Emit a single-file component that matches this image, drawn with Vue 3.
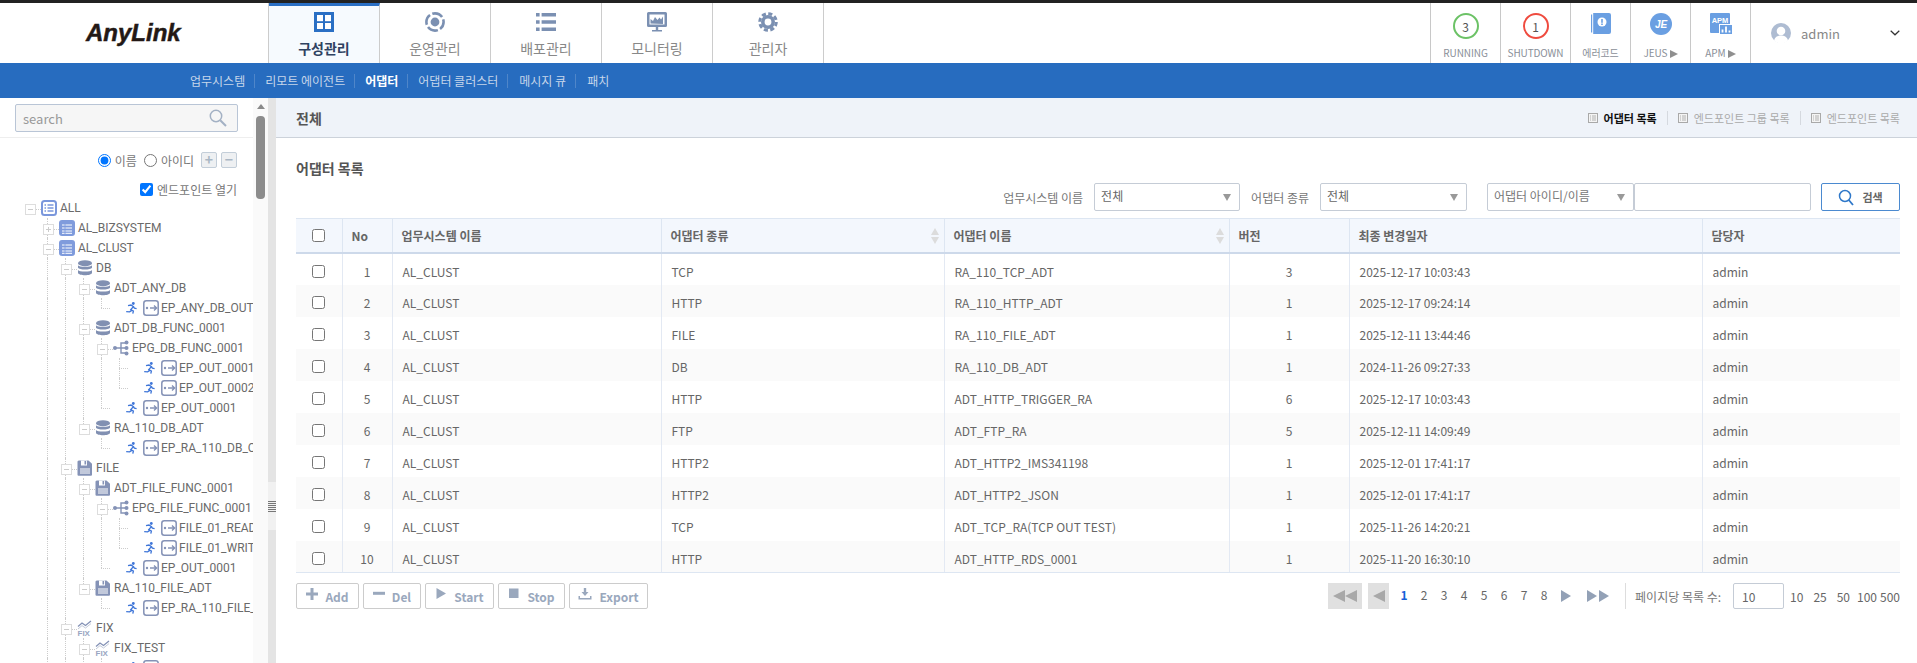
<template>
  <div class="app">
    <svg class="sprite" width="0" height="0">
      <defs>
        <symbol id="i-all" viewBox="0 0 16 16">
          <rect x="1" y="1" width="14" height="14" rx="2.5" fill="#fff" stroke="#7a97dc" stroke-width="2" />
          <path d="M3.5 5h1.5M6.5 5h6M3.500 8h1.500M6.500 8h6M3.500 11h1.500M6.500 11h6" stroke="#7a97dc" stroke-width="1.500" />
        </symbol>
        <symbol id="i-sys" viewBox="0 0 16 16">
          <rect width="16" height="16" rx="3" fill="#7f9bdc" />
          <path d="M3 5h10M3 8h10M3 11h10M3 13.300h10" stroke="#fff" stroke-width="1" />
          <path d="M6 4v10" stroke="#7f9bdc" stroke-width="0.8" />
        </symbol>
        <symbol id="i-db" viewBox="0 0 16 16">
          <ellipse cx="8" cy="3.2" rx="7" ry="3" fill="#8190b2" />
          <path d="M1 5.200c1 2 13 2 14 0v2.600c-1 2.400-13 2.400-14 0zM1 10c1 2 13 2 14 0v3c-1 3-13 3-14 0z" fill="#8190b2" />
        </symbol>
        <symbol id="i-file" viewBox="0 0 16 16">
          <path d="M1.500 0.500h10l3.500 3.200v11a1 1 0 0 1-1 1H1.500a1 1 0 0 1-1-1v-13a1 1 0 0 1 1-1z" fill="#8492b6" />
          <rect x="4" y="0.5" width="6" height="5" fill="#fff" />
          <rect x="7.5" y="1" width="1.6" height="3.5" fill="#8492b6" />
          <path d="M3 9h10M3 11h10M3 13h10" stroke="#fff" stroke-width="1" />
        </symbol>
        <symbol id="i-group" viewBox="0 0 16 16">
          <circle cx="2" cy="8" r="2" fill="#8492b6" />
          <path d="M3 8h5M8 8V3h4M8 8v5h4M8 8h4" stroke="#8492b6" stroke-width="1.4" fill="none" />
          <circle cx="13.5" cy="2.5" r="2" fill="#8492b6" />
          <circle cx="13.5" cy="8" r="2" fill="#8492b6" />
          <circle cx="13.5" cy="13.5" r="2" fill="#8492b6" />
        </symbol>
        <symbol id="i-ep" viewBox="0 0 16 16">
          <rect x="0.8" y="0.8" width="14.4" height="14.4" rx="2.5" fill="#fff" stroke="#8492b6" stroke-width="1.5" />
          <circle cx="4" cy="8" r="1.2" fill="#8492b6" />
          <path d="M7 8h6.500M11 5.600 13.600 8 11 10.400" stroke="#8492b6" stroke-width="1.4" fill="none" />
        </symbol>
        <symbol id="i-run" viewBox="0 0 12 12">
          <circle cx="8.3" cy="1.5" r="1.4" fill="#3f76d8" />
          <path d="M3 3.700 6 3l2.400 1.600-2.600 3 2.600 1.400-.6 2.600M6.800 8.400 4.600 9.800 1.200 9.600M8.400 4.600l1 1.600 2.200.4" stroke="#3f76d8" stroke-width="1.3" fill="none" />
        </symbol>
        <symbol id="i-fix" viewBox="0 0 16 16">
          <path d="M1 6.500 5 3l3.500 2.500L14 1" stroke="#8492b6" stroke-width="1.3" fill="none" />
          <path d="M1 9 5 5.600l3.500 2.400L14 3.600" stroke="#c3cad9" stroke-width="1" fill="none" />
          <text x="0.5" y="15.5" font-size="8" font-weight="700" font-family="Liberation Sans, sans-serif" fill="#9aa6c2">FIX</text>
        </symbol>
        <symbol id="i-doc" viewBox="0 0 10 10">
          <rect x="0.5" y="0.5" width="9" height="9" fill="#f4f4f4" stroke="#a9a9a9" />
          <path d="M2 3h1M4 3h4M2 5h1M4 5h4M2 7h1M4 7h4" stroke="#a9a9a9" stroke-width="0.9" />
        </symbol>
      </defs>
    </svg>

    <div class="blackbar"></div>

    <header class="topbar">
      <div class="logo">AnyLink</div>
      <nav class="tabs">
        <a class="tab active">
          <svg width="20" height="20" viewBox="0 0 20 20">
            <rect width="20" height="20" fill="#2a6fc4" />
            <rect x="3" y="3" width="6" height="6.2" fill="#fff" />
            <rect x="11" y="3" width="6" height="6.2" fill="#fff" />
            <rect x="3" y="11" width="6" height="6" fill="#fff" />
            <rect x="11" y="11" width="6" height="6" fill="#fff" />
          </svg>
          <span>구성관리</span>
        </a>
        <a class="tab">
          <svg width="20" height="20" viewBox="0 0 20 20">
            <circle cx="10" cy="10" r="8.6" fill="none" stroke="#7b90b2" stroke-width="2.6" stroke-dasharray="11 2.5" stroke-dashoffset="3" />
            <circle cx="10" cy="10" r="4.4" fill="#7b90b2" />
          </svg>
          <span>운영관리</span>
        </a>
        <a class="tab">
          <svg width="20" height="20" viewBox="0 0 20 20">
            <path d="M0 1h3.600v3.400H0zM5.600 1H20v3.400H5.600zM0 8.300h3.600v3.400H0zM5.600 8.300H20v3.400H5.600zM0 15.600h3.600V19H0zM5.600 15.600H20V19H5.600z" fill="#7b90b2" />
          </svg>
          <span>배포관리</span>
        </a>
        <a class="tab">
          <svg width="20" height="20" viewBox="0 0 20 20">
            <path d="M1.500 0h17A1.500 1.500 0 0 1 20 1.500v12a1.500 1.500 0 0 1-1.500 1.500h-17A1.500 1.500 0 0 1 0 13.500v-12A1.500 1.500 0 0 1 1.500 0z" fill="#7b90b2" />
            <rect x="2.500" y="2.500" width="15" height="10" fill="#fff" />
            <path d="M3.500 11.500V7l2.500 2 2-4 2.500 3 2-2.500 1.500 2 2-3v7.500z" fill="#7b90b2" />
            <path d="M8.800 15h2.400v3H15v1.600H5V18h3.800z" fill="#7b90b2" />
          </svg>
          <span>모니터링</span>
        </a>
        <a class="tab">
          <svg width="20" height="20" viewBox="0 0 20 20">
            <circle cx="10" cy="10" r="8.300" fill="none" stroke="#7b90b2" stroke-width="3" stroke-dasharray="4.100 2.420" />
            <circle cx="10" cy="10" r="5.200" fill="none" stroke="#7b90b2" stroke-width="3.600" />
          </svg>
          <span>관리자</span>
        </a>
      </nav>

      <div class="status">
        <div class="stat">
          <span class="ring green">3</span>
          <small>RUNNING</small>
        </div>
        <div class="stat">
          <span class="ring red">1</span>
          <small>SHUTDOWN</small>
        </div>
        <div class="stat narrow">
          <svg width="20" height="21" viewBox="0 0 20 21">
            <path d="M0 1.500h1.200v18H0zM2.200 0H18a2 2 0 0 1 2 2v17a2 2 0 0 1-2 2H2.200z" fill="#6a9fe2" />
            <circle cx="11" cy="9" r="4.500" fill="#fff" />
            <rect x="10.200" y="6" width="1.600" height="3.800" fill="#6a9fe2" />
            <rect x="10.200" y="10.500" width="1.600" height="1.500" fill="#6a9fe2" />
          </svg>
          <small>에러코드</small>
        </div>
        <div class="stat narrow">
          <svg width="22" height="22" viewBox="0 0 22 22">
            <circle cx="11" cy="11" r="11" fill="#6a9fe2" />
            <text x="11" y="15" text-anchor="middle" font-size="10" font-weight="700" font-style="italic" font-family="Liberation Sans, sans-serif" fill="#fff">JE</text>
          </svg>
          <small>JEUS <i class="play"></i></small>
        </div>
        <div class="stat narrow">
          <svg width="22" height="21" viewBox="0 0 22 21">
            <rect width="20" height="20" rx="1" fill="#6a9fe2" />
            <text x="10" y="9.500" text-anchor="middle" font-size="7.500" font-weight="700" font-family="Liberation Sans, sans-serif" fill="#fff">APM</text>
            <rect x="9" y="11" width="13" height="10" fill="#fff" />
            <rect x="10" y="12" width="12" height="9" fill="#6a9fe2" />
            <path d="M12.500 19.500v-3M16 19.500v-6M19.500 19.500v-2" stroke="#fff" stroke-width="1.800" />
          </svg>
          <small>APM <i class="play"></i></small>
        </div>
      </div>

      <div class="user">
        <svg width="20" height="20" viewBox="0 0 20 20">
          <circle cx="10" cy="10" r="10" fill="#aebcd2" />
          <circle cx="10" cy="8" r="4.300" fill="#fff" />
          <path d="M3 17.500c1-3.800 4-5 7-5s6 1.200 7 5a10 10 0 0 1-14 0z" fill="#fff" />
        </svg>
        <span>admin</span>
        <svg class="chev" width="10" height="6" viewBox="0 0 10 6">
          <path d="M.7.7 5 4.800 9.300.7" stroke="#333" stroke-width="1.200" fill="none" />
        </svg>
      </div>
    </header>

    <nav class="subnav">
      <a v-for="item in subMenu" :key="item" :class="{ on: item === '어댑터' }">{{ item }}</a>
    </nav>

    <div class="body">
      <aside class="side">
        <div class="side-main">
          <div class="side-search">
            <div class="search-box">
              <span>search</span>
              <svg width="18" height="18" viewBox="0 0 18 18">
                <circle cx="7" cy="7" r="5.700" fill="none" stroke="#a3b1c4" stroke-width="1.500" />
                <path d="M11.200 11.200 17 17" stroke="#a3b1c4" stroke-width="2" />
              </svg>
            </div>
          </div>
          <div class="side-opts">
            <div class="opt-row">
              <label><input type="radio" name="tree" checked />이름</label>
              <label class="tight"><input type="radio" name="tree" />아이디</label>
              <span class="sq">+</span>
              <span class="sq">−</span>
            </div>
            <div class="opt-row second">
              <label><input type="checkbox" checked />엔드포인트 열기</label>
            </div>
          </div>
          <ul class="tree">
            <li v-for="(row, i) in treeRows" :key="i" class="node" :class="{ leaf: row.leaf }">
              <span v-for="(g, c) in row.guides" :key="c" class="cell" :class="{ line: g }"></span>
              <span v-if="row.leaf" class="cell elbow" :class="{ line: row.next, half: !row.next }"></span>
              <span v-else class="cell" :class="{ line: row.next, half: row.d > 0 && !row.next }">
                <i class="fold" :class="{ plus: row.closed }"></i>
                <i class="dash"></i>
              </span>
              <svg v-if="row.leaf" class="run" width="12" height="12"><use href="#i-run" /></svg>
              <svg class="ico" width="16" height="16"><use :href="'#i-' + row.icon" /></svg>
              <span class="label">{{ row.t }}</span>
            </li>
          </ul>
        </div>
        <div class="side-scroll">
          <i class="up"></i>
          <i class="thumb"></i>
        </div>
        <div class="splitter">
          <div class="grip"><i></i></div>
        </div>
      </aside>

      <main class="main">
        <div class="titlebar">
          <h2>전체</h2>
          <div class="views">
            <a v-for="v in views" :key="v" :class="{ on: v === '어댑터 목록' }">
              <svg width="10" height="10"><use href="#i-doc" /></svg>{{ v }}
            </a>
          </div>
        </div>

        <section class="content">
          <h3>어댑터 목록</h3>

          <div class="filters">
            <label class="f-label first">업무시스템 이름</label>
            <div class="sel short"><span>전체</span><i></i></div>
            <label class="f-label">어댑터 종류</label>
            <div class="sel"><span>전체</span><i></i></div>
            <div class="sel wide"><span>어댑터 아이디/이름</span><i></i></div>
            <div class="txt"></div>
            <button class="search-btn">
              <svg width="17" height="17" viewBox="0 0 17 17">
                <circle cx="7" cy="7" r="5.500" fill="none" stroke="#2f78c9" stroke-width="1.500" />
                <path d="M10.800 11 15 16" stroke="#2f78c9" stroke-width="1.800" />
              </svg>
              검색
            </button>
          </div>

          <table class="grid">
            <colgroup>
              <col v-for="w in colWidths" :key="w" :style="{ width: w + 'px' }" />
            </colgroup>
            <thead>
              <tr>
                <th class="c"><input type="checkbox" /></th>
                <th>No</th>
                <th>업무시스템 이름</th>
                <th class="sort">어댑터 종류</th>
                <th class="sort">어댑터 이름</th>
                <th>버전</th>
                <th>최종 변경일자</th>
                <th>담당자</th>
              </tr>
            </thead>
            <tbody>
              <tr v-for="(r, i) in adapters" :key="i">
                <td class="c"><input type="checkbox" /></td>
                <td class="c">{{ i + 1 }}</td>
                <td>AL_CLUST</td>
                <td>{{ r[0] }}</td>
                <td>{{ r[1] }}</td>
                <td class="c">{{ r[2] }}</td>
                <td>{{ r[3] }}</td>
                <td>admin</td>
              </tr>
            </tbody>
          </table>

          <div class="foot">
            <div class="actions">
              <button class="b-add">
                <svg width="12" height="12" viewBox="0 0 12 12"><path d="M4.500 0h3v4.500H12v3H7.500V12h-3V7.500H0v-3h4.500z" fill="#9aa8bd" /></svg>
                Add
              </button>
              <button class="b-del">
                <svg width="12" height="12" viewBox="0 0 12 12"><rect y="3.800" width="12" height="3" fill="#9aa8bd" /></svg>
                Del
              </button>
              <button class="b-start">
                <svg width="12" height="12" viewBox="0 0 12 12"><path d="M1.500 0 11 5.500 1.500 11z" fill="#9aa8bd" /></svg>
                Start
              </button>
              <button class="b-stop">
                <svg width="12" height="12" viewBox="0 0 12 12"><rect x="1" y="0.500" width="9.500" height="9.500" fill="#9aa8bd" /></svg>
                Stop
              </button>
              <button class="b-export">
                <svg width="14" height="12" viewBox="0 0 14 12"><path d="M5.800 0h2.400v4h2.300L7 8 3.500 4h2.300zM.5 8H2v2h10V8h1.500v3.500H.5z" fill="#9aa8bd" /></svg>
                Export
              </button>
            </div>

            <div class="pager">
              <span class="pg-box big"><i class="tl"></i><i class="tl"></i></span>
              <span class="pg-box"><i class="tl"></i></span>
              <div class="pages">
                <a v-for="p in 8" :key="p" :class="{ on: p === 1 }">{{ p }}</a>
              </div>
              <i class="tr next"></i>
              <span class="last"><i class="tr"></i><i class="tr"></i></span>
              <span class="pg-sep"></span>
              <span class="pg-label">페이지당 목록 수:</span>
              <div class="pg-input">10</div>
              <div class="pg-sizes">
                <a v-for="s in [10, 25, 50, 100, 500]" :key="s">{{ s }}</a>
              </div>
            </div>
          </div>
        </section>
      </main>
    </div>
  </div>
</template>

<script setup>
const subMenu = ['업무시스템', '리모트 에이전트', '어댑터', '어댑터 클러스터', '메시지 큐', '패치']
const views = ['어댑터 목록', '엔드포인트 그룹 목록', '엔드포인트 목록']
const colWidths = [46, 50, 269, 283, 285, 120, 353, 198]

const adapters = [
  ['TCP', 'RA_110_TCP_ADT', 3, '2025-12-17 10:03:43'],
  ['HTTP', 'RA_110_HTTP_ADT', 1, '2025-12-17 09:24:14'],
  ['FILE', 'RA_110_FILE_ADT', 1, '2025-12-11 13:44:46'],
  ['DB', 'RA_110_DB_ADT', 1, '2024-11-26 09:27:33'],
  ['HTTP', 'ADT_HTTP_TRIGGER_RA', 6, '2025-12-17 10:03:43'],
  ['FTP', 'ADT_FTP_RA', 5, '2025-12-11 14:09:49'],
  ['HTTP2', 'ADT_HTTP2_IMS341198', 1, '2025-12-01 17:41:17'],
  ['HTTP2', 'ADT_HTTP2_JSON', 1, '2025-12-01 17:41:17'],
  ['TCP', 'ADT_TCP_RA(TCP OUT TEST)', 1, '2025-11-26 14:20:21'],
  ['HTTP', 'ADT_HTTP_RDS_0001', 1, '2025-11-20 16:30:10']
]

const rawTree = [
  { d: 0, t: 'ALL', icon: 'all' },
  { d: 1, t: 'AL_BIZSYSTEM', icon: 'sys', closed: true },
  { d: 1, t: 'AL_CLUST', icon: 'sys' },
  { d: 2, t: 'DB', icon: 'db' },
  { d: 3, t: 'ADT_ANY_DB', icon: 'db' },
  { d: 4, t: 'EP_ANY_DB_OUT', icon: 'ep', leaf: true },
  { d: 3, t: 'ADT_DB_FUNC_0001', icon: 'db' },
  { d: 4, t: 'EPG_DB_FUNC_0001', icon: 'group' },
  { d: 5, t: 'EP_OUT_0001', icon: 'ep', leaf: true },
  { d: 5, t: 'EP_OUT_0002', icon: 'ep', leaf: true },
  { d: 4, t: 'EP_OUT_0001', icon: 'ep', leaf: true },
  { d: 3, t: 'RA_110_DB_ADT', icon: 'db' },
  { d: 4, t: 'EP_RA_110_DB_OUT', icon: 'ep', leaf: true },
  { d: 2, t: 'FILE', icon: 'file' },
  { d: 3, t: 'ADT_FILE_FUNC_0001', icon: 'file' },
  { d: 4, t: 'EPG_FILE_FUNC_0001', icon: 'group' },
  { d: 5, t: 'FILE_01_READ', icon: 'ep', leaf: true },
  { d: 5, t: 'FILE_01_WRITE', icon: 'ep', leaf: true },
  { d: 4, t: 'EP_OUT_0001', icon: 'ep', leaf: true },
  { d: 3, t: 'RA_110_FILE_ADT', icon: 'file' },
  { d: 4, t: 'EP_RA_110_FILE_OUT', icon: 'ep', leaf: true },
  { d: 2, t: 'FIX', icon: 'fix' },
  { d: 3, t: 'FIX_TEST', icon: 'fix' },
  { d: 4, t: 'EP_FIX', icon: 'ep', leaf: true },
  { d: 3, t: 'FIX_TEST2', icon: 'fix' },
  { d: 2, t: 'FTP', icon: 'file' },
  { d: 1, t: 'AL_TEST', icon: 'sys' }
]

function hasLater(i, col) {
  for (let j = i + 1; j < rawTree.length; j++) {
    if (rawTree[j].d < col) return false
    if (rawTree[j].d === col) return true
  }
  return false
}

const treeRows = rawTree.map((r, i) => ({
  ...r,
  next: hasLater(i, r.d),
  guides: Array.from({ length: r.d }, (_, c) => hasLater(i, c))
}))
</script>

<style>
html,
body {
  margin: 0;
  height: 100%;
  overflow: hidden;
  background: #fff;
}
</style>

<style scoped>
.app {
  height: 663px;
  display: flex;
  flex-direction: column;
  overflow: hidden;
  font-family: "Noto Sans CJK KR", "Noto Sans", sans-serif;
  font-size: 12px;
  color: #666;
}

.sprite {
  position: absolute;
}

.blackbar {
  height: 3px;
  background: #222;
  flex: none;
}

.topbar {
  height: 60px;
  flex: none;
  display: flex;
  background: #fff;
}

.logo {
  width: 268px;
  flex: none;
  box-sizing: border-box;
  padding: 15px 0 0 86px;
  font-family: "Liberation Sans", sans-serif;
  font-weight: 700;
  font-style: italic;
  font-size: 24px;
  line-height: 30px;
  color: #231815;
  -webkit-text-stroke: 0.5px #231815;
}

.tabs {
  display: flex;
  border-left: 1px solid #ccc;
}

.tab {
  width: 111px;
  border-right: 1px solid #ccc;
  display: flex;
  flex-direction: column;
  align-items: center;
  padding-top: 9px;
  box-sizing: border-box;
  font-size: 14px;
  color: #888;
}

.tab span {
  margin-top: 6px;
  line-height: 20px;
}

.tab.active {
  background: #f6fafe;
  border-top: 3px solid #2a6fc4;
  padding-top: 6px;
  color: #2f4261;
  font-weight: 700;
}

.status {
  margin-left: auto;
  display: flex;
  border-left: 1px solid #c8c8c8;
}

.stat {
  width: 70px;
  border-right: 1px solid #c8c8c8;
  display: flex;
  flex-direction: column;
  align-items: center;
  padding-top: 10px;
  box-sizing: border-box;
  height: 60px;
}

.stat.narrow {
  width: 60px;
}

.stat small {
  margin-top: auto;
  height: 20px;
  font-size: 10px;
  letter-spacing: -0.1px;
  line-height: 20px;
  color: #8a8f98;
  white-space: nowrap;
}

.ring {
  width: 26px;
  height: 26px;
  box-sizing: border-box;
  border-radius: 50%;
  border: 2px solid;
  display: flex;
  align-items: center;
  justify-content: center;
  font-size: 12px;
  color: #555;
}

.ring.green {
  border-color: #6cc266;
}

.ring.red {
  border-color: #ef4b3f;
}

.play {
  display: inline-block;
  border-left: 8px solid #8f8f8f;
  border-top: 4.5px solid transparent;
  border-bottom: 4.5px solid transparent;
  vertical-align: -1px;
}

.user {
  width: 166px;
  flex: none;
  box-sizing: border-box;
  display: flex;
  align-items: center;
  padding: 0 17px 0 20px;
  font-size: 13px;
  color: #888;
}

.user span {
  margin-left: 10px;
}

.chev {
  margin-left: auto;
}

.subnav {
  height: 35px;
  flex: none;
  background: #276cbf;
  display: flex;
  align-items: center;
  padding-left: 190px;
  color: #c6d6ea;
}

.subnav a {
  padding: 0 9px 0 10px;
  border-right: 1px solid #4f86c9;
  line-height: 14px;
}

.subnav a:first-child {
  padding-left: 0;
}

.subnav a:nth-child(5) {
  padding-left: 11px;
}

.subnav a:last-child {
  padding-left: 11px;
  border-right: 0;
}

.subnav a.on {
  color: #fff;
  font-weight: 700;
}

.body {
  flex: 1;
  display: flex;
  min-height: 0;
}

.side {
  flex: none;
  width: 276px;
  display: flex;
}

.side-main {
  width: 253px;
  overflow: hidden;
  font-family: Roboto, "Noto Sans CJK KR", sans-serif;
}

.side-search {
  height: 40px;
  box-sizing: border-box;
  padding: 6px 15px 0;
  border-bottom: 1px solid #eee;
}

.search-box {
  height: 28px;
  box-sizing: border-box;
  border: 1px solid #b9c5d6;
  border-radius: 2px;
  background: #f6f6f6;
  display: flex;
  align-items: center;
  justify-content: space-between;
  padding: 0 10px 0 7px;
  font-family: "Noto Sans CJK KR", sans-serif;
  font-size: 13px;
  color: #999;
}

.side-opts {
  padding: 13px 16px 0 0;
  color: #777;
  font-family: "Noto Sans CJK KR", sans-serif;
}

.opt-row {
  height: 18px;
  display: flex;
  align-items: center;
  justify-content: flex-end;
}

.opt-row.second {
  margin-top: 12px;
  height: 17px;
}

.opt-row label {
  display: flex;
  align-items: center;
  margin-right: 7px;
}

.opt-row label.tight {
  margin-right: 3px;
}

.opt-row.second label {
  margin-right: 0;
}

.opt-row input {
  margin: 0 4px 0 0;
  width: 13px;
  height: 13px;
}

.sq {
  width: 16px;
  height: 16px;
  box-sizing: border-box;
  border: 1px solid #c3ced9;
  border-radius: 2px;
  background: #eef0f2;
  color: #a9b6c4;
  font-size: 14px;
  font-weight: 700;
  line-height: 13px;
  text-align: center;
  margin-left: 4px;
}

.tree {
  list-style: none;
  margin: 0;
  padding: 0 0 0 25px;
  color: #6a6a6a;
}

.node {
  height: 20px;
  display: flex;
  align-items: center;
  white-space: nowrap;
}

.cell {
  flex: none;
  width: 18px;
  height: 20px;
  position: relative;
}

.cell.line::before,
.cell.half::before {
  content: "";
  position: absolute;
  left: 4px;
  top: 0;
  bottom: 0;
  border-left: 1px dotted #ccc;
}

.cell.half::before {
  bottom: 10px;
}

.fold {
  position: absolute;
  left: 0;
  top: 6px;
  width: 11px;
  height: 11px;
  box-sizing: border-box;
  border: 1px solid #ddd;
  background:
    linear-gradient(#ccc, #ccc) center / 5px 1px no-repeat,
    #fff;
}

.fold.plus {
  background:
    linear-gradient(#ccc, #ccc) center / 5px 1px no-repeat,
    linear-gradient(#ccc, #ccc) center / 1px 5px no-repeat,
    #fff;
}

.dash {
  position: absolute;
  left: 11px;
  top: 11px;
  width: 5px;
  border-top: 1px dotted #ccc;
}

.elbow::after {
  content: "";
  position: absolute;
  left: 4px;
  top: 10px;
  width: 9px;
  border-top: 1px dotted #ccc;
}

.run {
  flex: none;
  margin: 0 6px 0 10px;
}

.ico {
  flex: none;
  margin-left: -2px;
}

.leaf .ico {
  margin-left: 0;
}

.label {
  margin-left: 3px;
}

.leaf .label {
  margin-left: 2px;
}

.side-scroll {
  width: 15px;
  background: #fafafa;
  display: flex;
  flex-direction: column;
  align-items: center;
  padding-top: 6px;
  box-sizing: border-box;
}

.up {
  border-bottom: 5px solid #8a8a8a;
  border-left: 4px solid transparent;
  border-right: 4px solid transparent;
}

.thumb {
  width: 9px;
  height: 83px;
  margin-top: 7px;
  border-radius: 4px;
  background: #8c8c8c;
}

.splitter {
  width: 8px;
  background: #e4e4e4;
  padding-top: 384px;
  box-sizing: border-box;
}

.grip {
  height: 48px;
  background: #f1f1f1;
  display: flex;
  align-items: center;
}

.grip i {
  width: 8px;
  height: 11px;
  background: repeating-linear-gradient(#777 0 1px, transparent 1px 2px);
}

.main {
  flex: 1;
  min-width: 0;
}

.titlebar {
  height: 40px;
  box-sizing: border-box;
  background: #eff3f9;
  border-bottom: 1px solid #ccd2da;
  display: flex;
  align-items: center;
  justify-content: space-between;
  padding: 0 17px 0 20px;
}

.titlebar h2 {
  margin: 0;
  font-size: 14px;
  font-weight: 700;
  color: #555;
}

.views {
  display: flex;
  font-size: 11px;
  color: #aaa;
}

.views a {
  display: flex;
  align-items: center;
  height: 14px;
  padding: 0 0 0 10px;
  margin-left: 10px;
  border-left: 1px solid #d5d9df;
}

.views a:first-child {
  border-left: 0;
}

.views svg {
  margin-right: 6px;
}

.views a.on {
  color: #111;
  font-weight: 700;
}

.content {
  padding: 0 17px 0 20px;
}

.content h3 {
  margin: 0;
  padding-top: 20px;
  font-size: 14px;
  line-height: 20px;
  font-weight: 700;
  color: #555;
}

.filters {
  margin-top: 5px;
  height: 28px;
  display: flex;
  justify-content: flex-end;
  align-items: center;
}

.f-label {
  margin: 0 11px 0 11px;
  color: #777;
}

.sel {
  width: 147px;
  height: 28px;
  box-sizing: border-box;
  border: 1px solid #c5ccd6;
  border-radius: 2px;
  display: flex;
  justify-content: space-between;
  align-items: center;
  padding: 0 8px 4px 6px;
  color: #666;
  background: #fff;
}

.sel.short {
  width: 146px;
}

.sel.wide {
  margin-left: 20px;
  color: #777;
}

.sel i {
  border-top: 7px solid #999;
  border-left: 4px solid transparent;
  border-right: 4px solid transparent;
  margin-top: 4px;
}

.txt {
  width: 177px;
  height: 28px;
  box-sizing: border-box;
  border: 1px solid #c5ccd6;
  border-radius: 2px;
}

.search-btn {
  width: 79px;
  height: 28px;
  margin-left: 10px;
  box-sizing: border-box;
  border: 1px solid #4b8ad0;
  border-radius: 2px;
  background: #fff;
  display: flex;
  align-items: center;
  justify-content: center;
  gap: 7px;
  padding: 0;
  font: 700 11px "Noto Sans CJK KR", sans-serif;
  color: #666;
}

.grid {
  margin-top: 7px;
  width: 1604px;
  border-collapse: collapse;
  table-layout: fixed;
}

.grid th {
  height: 34px;
  padding: 0 9px;
  box-sizing: border-box;
  background: #f3f7fd;
  border-top: 1px solid #dde6f2;
  border-bottom: 2px solid #cdd9ea;
  border-left: 1px solid #dde6f2;
  text-align: left;
  font-size: 12px;
  font-weight: 700;
  color: #666;
}

.grid th:first-child,
.grid td:first-child {
  border-left: 0;
}

.grid th.c {
  text-align: center;
}

.grid th.sort {
  position: relative;
}

.grid th.sort::before,
.grid th.sort::after {
  content: "";
  position: absolute;
  right: 5px;
  border-left: 4px solid transparent;
  border-right: 4px solid transparent;
}

.grid th.sort::before {
  top: 9px;
  border-bottom: 7px solid #dcdcdc;
}

.grid th.sort::after {
  top: 18px;
  border-top: 7px solid #dcdcdc;
}

.grid td {
  height: 32px;
  padding: 4px 10px 0;
  box-sizing: border-box;
  border-left: 1px solid #e3e9f3;
  font-size: 12px;
  color: #666;
  white-space: nowrap;
}

.grid td.c {
  text-align: center;
}

.grid tbody tr:nth-child(even) td {
  background: #fafafa;
}

.grid tbody tr:last-child td {
  border-bottom: 1px solid #dde6f2;
}

.grid input {
  display: block;
  margin: 0 auto;
  width: 13px;
  height: 13px;
}

.foot {
  margin-top: 10px;
  display: flex;
  justify-content: space-between;
}

.actions {
  display: flex;
  gap: 4px;
}

.actions button {
  height: 26px;
  box-sizing: border-box;
  border: 1px solid #ccc;
  border-radius: 2px;
  background: #fff;
  padding: 0;
  display: flex;
  align-items: center;
  justify-content: center;
  gap: 7px;
  font: 700 12px "Noto Sans CJK KR", sans-serif;
  color: #9aa8bd;
}

.b-add { width: 63px; }
.b-del { width: 58px; }
.b-start { width: 69px; }
.b-stop { width: 67px; }
.b-export { width: 79px; }

.actions svg {
  margin-top: -4px;
}

.pager {
  display: flex;
  align-items: center;
  height: 26px;
}

.pg-box {
  width: 21px;
  height: 26px;
  margin-left: 6px;
  background: #e0e0e0;
  display: flex;
  align-items: center;
  justify-content: center;
}

.pg-box.big {
  width: 34px;
  margin-left: 0;
}

.tl {
  border-right: 12px solid #a8a8a8;
  border-top: 6px solid transparent;
  border-bottom: 6px solid transparent;
}

.tr {
  border-left: 10px solid #93a1b6;
  border-top: 6px solid transparent;
  border-bottom: 6px solid transparent;
}

.pages {
  display: flex;
  margin-left: 5px;
}

.pages a {
  width: 20px;
  text-align: center;
  color: #666;
  line-height: 26px;
  margin-top: -3px;
}

.pages a.on {
  color: #1560d8;
  font-weight: 700;
}

.next {
  margin-left: 7px;
}

.last {
  display: flex;
  margin-left: 16px;
  gap: 2px;
}

.pg-sep {
  width: 1px;
  height: 26px;
  margin: 0 9px 0 16px;
  background: #ddd;
}

.pg-label {
  width: 88px;
  color: #777;
  white-space: nowrap;
}

.pg-input {
  width: 51px;
  height: 26px;
  margin-left: 10px;
  box-sizing: border-box;
  border: 1px solid #c5ccd6;
  border-radius: 2px;
  padding-left: 8px;
  line-height: 26px;
  color: #666;
}

.pg-sizes {
  display: flex;
  margin-left: 6px;
  color: #666;
}

.pg-sizes a {
  margin-right: 10px;
}

.pg-sizes a:nth-child(3) {
  margin-right: 7px;
}

.pg-sizes a:nth-child(4) {
  margin-right: 3px;
}

.pg-sizes a:last-child {
  margin-right: 0;
}
</style>
